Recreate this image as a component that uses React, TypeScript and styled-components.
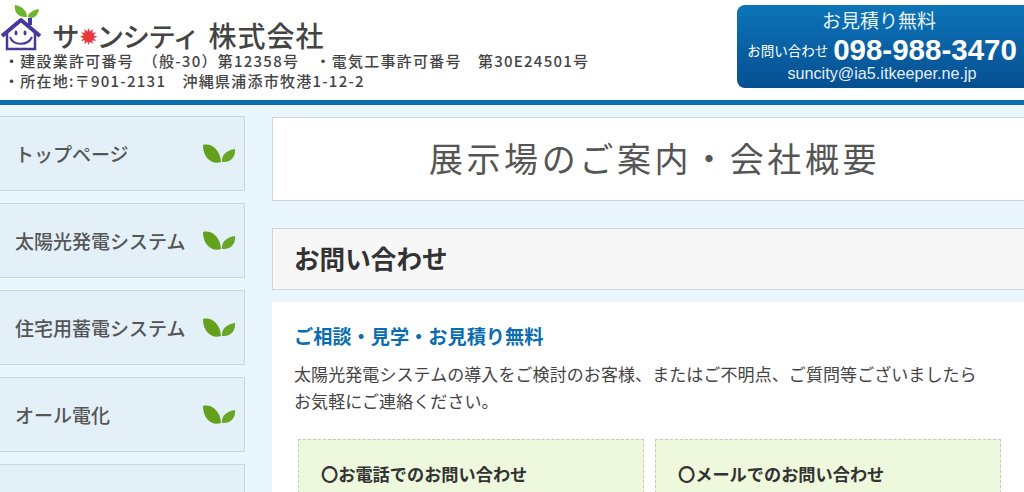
import React from 'react';
import styled, {createGlobalStyle} from 'styled-components';

const jp = `"Noto Sans CJK JP", "Liberation Sans", sans-serif`;

const GlobalStyle = createGlobalStyle`
    html, body {
        margin: 0;
        padding: 0;
        height: 492px;
        overflow: hidden;
        background: #eaf6fd;
        font-family: ${jp};
    }
`;

const Page = styled.div`
    width: 1024px;
    height: 492px;
    overflow: hidden;
`;

const Header = styled.header`
    height: 100px;
    background: #fff;
    border-bottom: 5px solid #0a6db0;
    display: flex;
    justify-content: space-between;
`;

const Brand = styled.div`
    display: flex;
    flex-direction: column;
    padding-top: 4px;
`;

const LogoRow = styled.div`
    display: flex;
    align-items: flex-end;
    height: 47px;
`;

const CompanyName = styled.div`
    margin-left: 10px;
    font-size: 27.5px;
    line-height: 32px;
    font-weight: 500;
    color: #444;
    white-space: nowrap;
    display: flex;
    align-items: center;
`;

const Sun = styled.span`
    color: #e8383d;
    font-size: 23px;
    line-height: 20px;
    margin: 0 -1px;
`;

const Kana = styled.span`
    letter-spacing: -1.6px;
`;

const CorpName = styled.span`
    margin-left: 10px;
    font-size: 28px;
    letter-spacing: 1px;
`;

const LicenseLine = styled.div`
    margin-left: 4px;
    font-size: 15px;
    line-height: 20px;
    font-weight: 500;
    color: #444;
    white-space: pre;
    letter-spacing: 1.25px;
`;

const ContactBox = styled.div`
    width: 287px;
    height: 83px;
    margin-top: 5px;
    border-radius: 8px 0 0 8px;
    background: linear-gradient(#0c74b8, #064f91);
    color: #fff;
    display: flex;
    flex-direction: column;
    align-items: center;
`;

const BoxTitle = styled.div`
    font-size: 19px;
    line-height: 20px;
    padding-top: 5px;
    margin-right: 3px;
    color: #e8f2f9;
`;

const PhoneRow = styled.div`
    display: flex;
    align-items: center;
    height: 34px;
    margin-top: 3px;
    padding-left: 3px;
`;

const PhoneLabel = styled.span`
    font-size: 13.5px;
    margin-right: 5px;
`;

const PhoneNumber = styled.span`
    font-family: "Liberation Sans", sans-serif;
    font-size: 29.5px;
    font-weight: 700;
    white-space: nowrap;
`;

const Email = styled.div`
    font-family: "Liberation Sans", sans-serif;
    font-size: 16.2px;
    line-height: 17px;
    margin: -2px 0 0 3px;
    color: #e3eef7;
`;

const Body = styled.div`
    display: flex;
    gap: 27px;
    padding-top: 11px;
`;

const Sidebar = styled.nav`
    width: 245px;
    flex: none;
    display: flex;
    flex-direction: column;
    gap: 12px;
`;

const NavItem = styled.div`
    height: 75px;
    box-sizing: border-box;
    background: #e3f0f8;
    border: 1px solid #c9d6de;
    border-left: none;
    display: flex;
    align-items: center;
    justify-content: space-between;
    padding: 0 8px 0 15px;
    font-size: 19px;
    font-weight: 500;
    color: #555;
    white-space: nowrap;
`;

const Main = styled.main`
    flex: 1;
    min-width: 0;
    display: flex;
    flex-direction: column;
`;

const TitleBox = styled.div`
    height: 84px;
    box-sizing: border-box;
    margin-top: 1px;
    background: #fff;
    border: 1px solid #cfd8de;
    border-right: none;
    font-size: 34px;
    font-weight: 400;
    color: #555;
    letter-spacing: 3.6px;
    display: flex;
    align-items: center;
    justify-content: center;
    padding: 0 0 4px 12px;
`;

const SectionHead = styled.h2`
    margin: 27px 0 0;
    height: 62px;
    box-sizing: border-box;
    background: #f7f7f7;
    border: 1px solid #cfd8de;
    border-right: none;
    padding: 0 0 4px 21px;
    font-size: 25.6px;
    font-weight: 700;
    color: #333;
    display: flex;
    align-items: center;
`;

const Content = styled.section`
    margin-top: 12px;
    background: #fff;
    flex: 1;
    padding: 21px 24px 0 22px;
`;

const Lead = styled.h3`
    margin: 0;
    font-size: 19.2px;
    line-height: 26px;
    font-weight: 700;
    color: #0a6db0;
`;

const Paragraph = styled.p`
    margin: 11px 0 0;
    font-size: 17px;
    line-height: 27px;
    letter-spacing: 0.08px;
    color: #444;
    white-space: nowrap;
`;

const Cards = styled.div`
    display: grid;
    grid-template-columns: 346px 346px;
    gap: 11px;
    margin: 25px 0 0 4px;
`;

const Card = styled.div`
    height: 90px;
    box-sizing: border-box;
    background: #edf8dc;
    border: 1px dashed #c3c9bd;
    padding: 21px 0 0 22px;
    font-size: 17.2px;
    line-height: 26px;
    font-weight: 700;
    color: #333;
`;

const Leaves = () => (
    <svg width="34" height="20" viewBox="0 0 34 20">
        <path d="M1 1 C9 -1 18 5 19 18 C10 21 1 14 1 1Z" fill="#63a01c"/>
        <path d="M33 5 C34 12 29 19 20 18 C19 11 25 6 33 5Z" fill="#6aa626"/>
    </svg>
);

const HouseLogo = () => (
    <svg width="42" height="47" viewBox="0 0 42 47">
        <path d="M24 13 C16 12 14 6 15 1 C21 2 27 6 27 13Z" fill="#6db52d"/>
        <path d="M28 13 C28 9 33 6 39 5 C38 12 33 16 28 13Z" fill="#6db52d"/>
        <rect x="28" y="14" width="4" height="7" fill="#453a9c"/>
        <path d="M2 32 L21 16 L40 32" fill="none" stroke="#453a9c" strokeWidth="4" strokeLinejoin="round"/>
        <path d="M7 29 V45 H35 V29" fill="none" stroke="#453a9c" strokeWidth="2.5"/>
        <ellipse cx="16" cy="29" rx="1.5" ry="2.4" fill="#453a9c"/>
        <ellipse cx="25" cy="29" rx="1.5" ry="2.4" fill="#453a9c"/>
        <path d="M10 33 C13 42 28 42 32 33" fill="none" stroke="#453a9c" strokeWidth="2"/>
    </svg>
);

const navItems = ['トップページ', '太陽光発電システム', '住宅用蓄電システム', 'オール電化', ''];

const App: React.FC = () => {
    return (
        <Page>
            <GlobalStyle/>
            <Header>
                <Brand>
                    <LogoRow>
                        <HouseLogo/>
                        <CompanyName>
                            サ<Sun>✹</Sun><Kana>ンシティ</Kana><CorpName>株式会社</CorpName>
                        </CompanyName>
                    </LogoRow>
                    <LicenseLine>{'・建設業許可番号　（般-30）第12358号　・電気工事許可番号　第30E24501号'}</LicenseLine>
                    <LicenseLine>{'・所在地:〒901-2131　沖縄県浦添市牧港1-12-2'}</LicenseLine>
                </Brand>
                <ContactBox>
                    <BoxTitle>お見積り無料</BoxTitle>
                    <PhoneRow>
                        <PhoneLabel>お問い合わせ</PhoneLabel>
                        <PhoneNumber>098-988-3470</PhoneNumber>
                    </PhoneRow>
                    <Email>suncity@ia5.itkeeper.ne.jp</Email>
                </ContactBox>
            </Header>
            <Body>
                <Sidebar>
                    {navItems.map((label, i) => (
                        <NavItem key={i}>
                            {label}
                            {label && <Leaves/>}
                        </NavItem>
                    ))}
                </Sidebar>
                <Main>
                    <TitleBox>展示場のご案内・会社概要</TitleBox>
                    <SectionHead>お問い合わせ</SectionHead>
                    <Content>
                        <Lead>ご相談・見学・お見積り無料</Lead>
                        <Paragraph>
                            太陽光発電システムの導入をご検討のお客様、またはご不明点、ご質問等ございましたら<br/>
                            お気軽にご連絡ください。
                        </Paragraph>
                        <Cards>
                            <Card>〇お電話でのお問い合わせ</Card>
                            <Card>〇メールでのお問い合わせ</Card>
                        </Cards>
                    </Content>
                </Main>
            </Body>
        </Page>
    );
};

export default App;
